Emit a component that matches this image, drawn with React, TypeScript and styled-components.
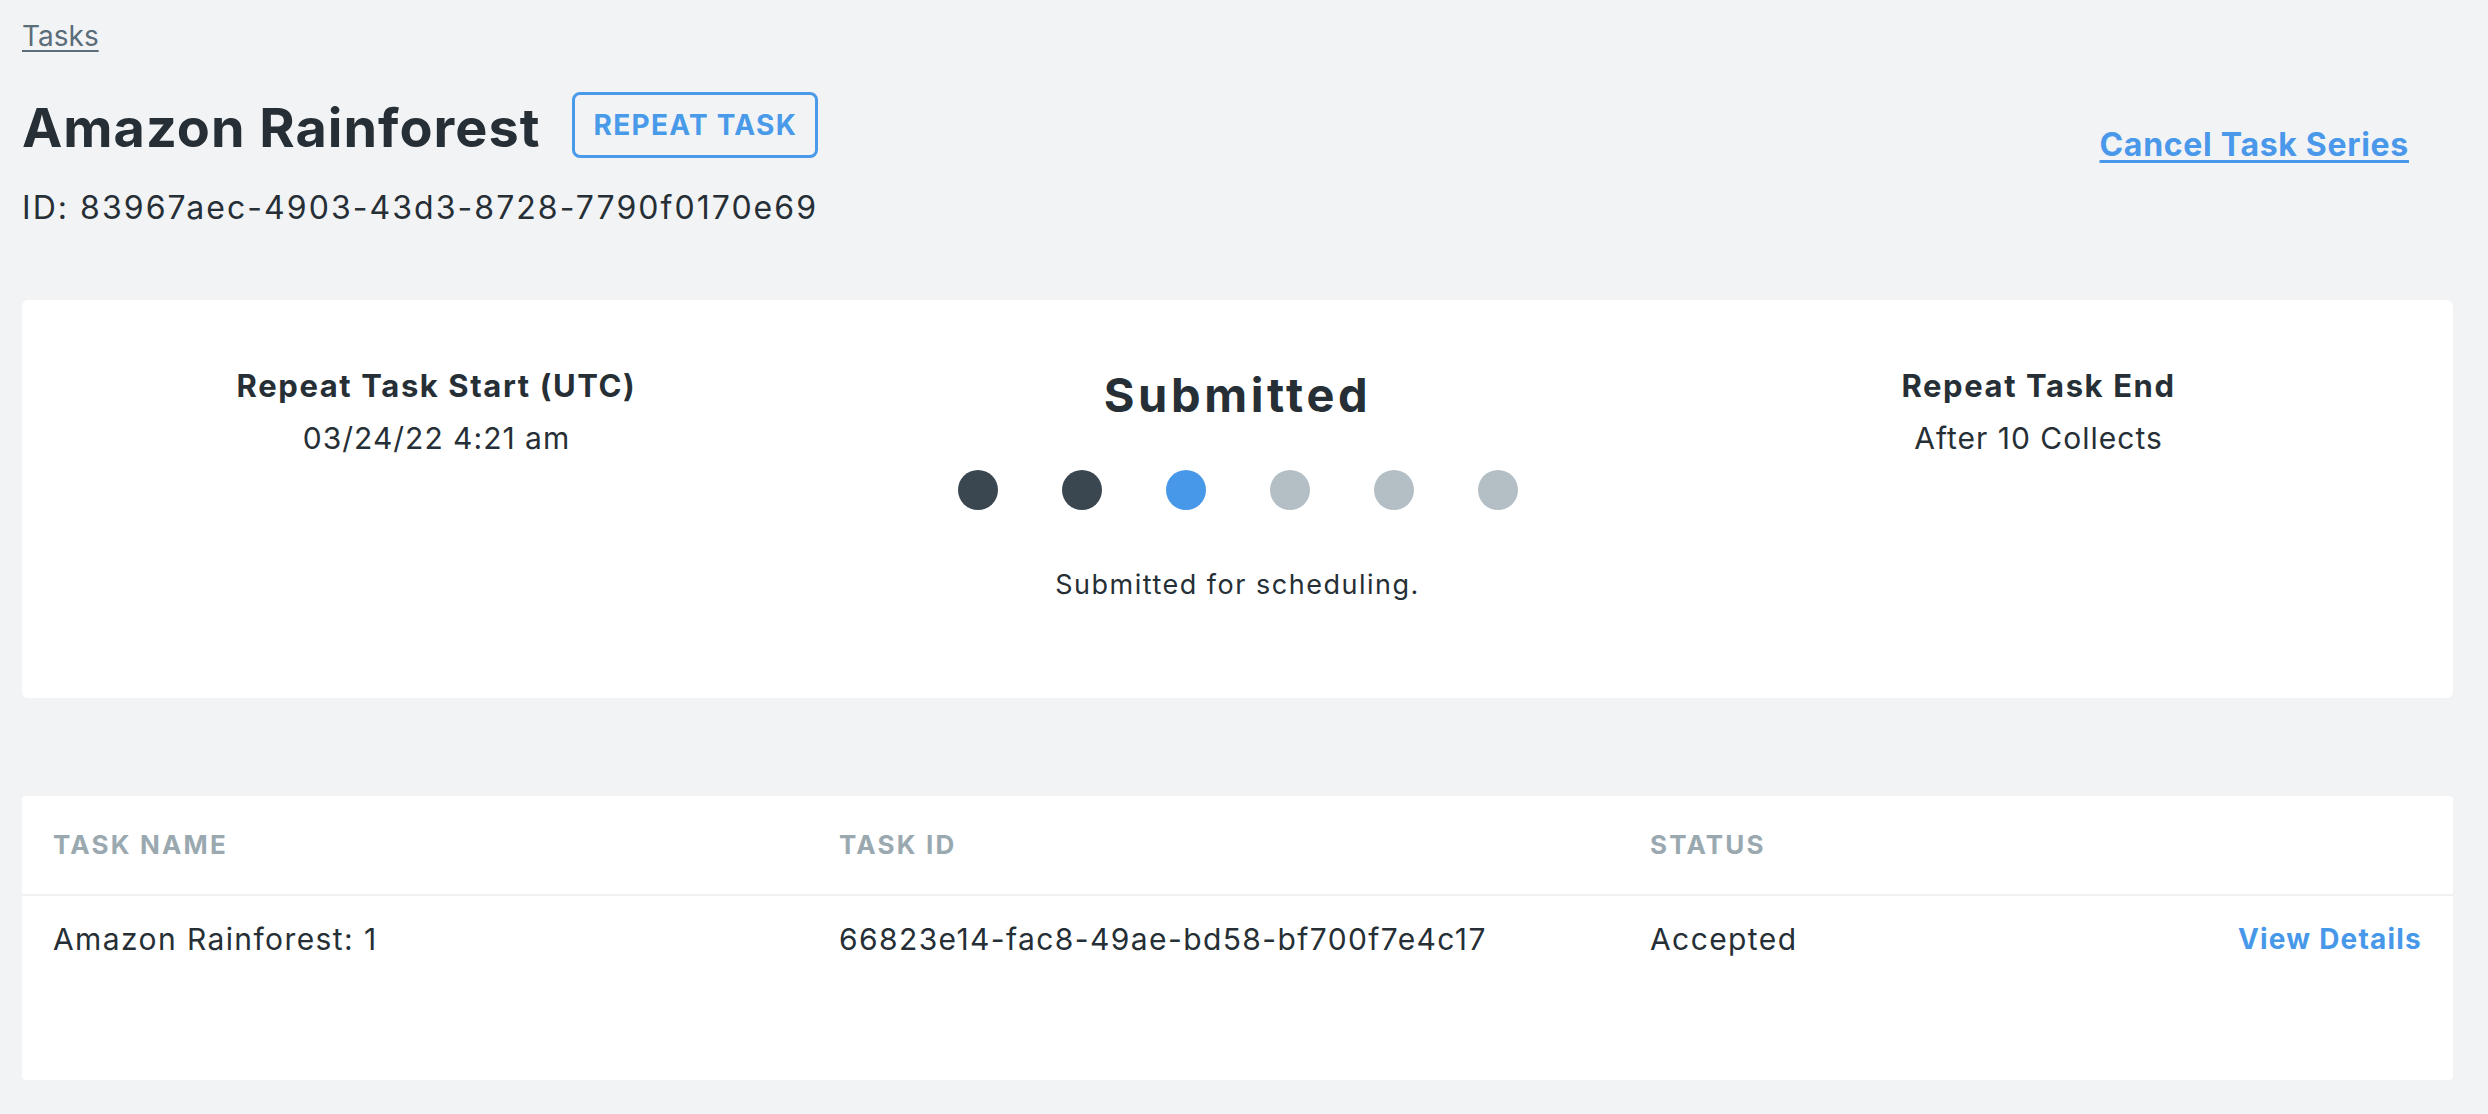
import styled, { createGlobalStyle } from "styled-components";

const GlobalStyle = createGlobalStyle`
  html, body {
    margin: 0;
    padding: 0;
    background-color: #f2f3f5;
  }
  body {
    font-family: Inter, "Noto Sans", "DejaVu Sans", sans-serif;
    color: #262f35;
  }
`;

type StepState = "done" | "current" | "todo";

const steps: StepState[] = ["done", "done", "current", "todo", "todo", "todo"];

const tasks = [
  {
    name: "Amazon Rainforest: 1",
    id: "66823e14-fac8-49ae-bd58-bf700f7e4c17",
    status: "Accepted",
  },
];

export default function App() {
  return (
    <>
      <GlobalStyle />
      <Page>
        <Breadcrumb href="#">Tasks</Breadcrumb>

        <Header>
          <div>
            <TitleRow>
              <Title>Amazon Rainforest</Title>
              <RepeatButton>REPEAT TASK</RepeatButton>
            </TitleRow>
            <SeriesId>ID: 83967aec-4903-43d3-8728-7790f0170e69</SeriesId>
          </div>
          <CancelLink href="#">Cancel Task Series</CancelLink>
        </Header>

        <SummaryCard>
          <InfoColumn>
            <InfoLabel>Repeat Task Start (UTC)</InfoLabel>
            <InfoValue>03/24/22 4:21 am</InfoValue>
          </InfoColumn>

          <StatusColumn>
            <StatusTitle>Submitted</StatusTitle>
            <Dots>
              {steps.map((s, i) => (
                <Dot key={i} $state={s} />
              ))}
            </Dots>
            <StatusText>Submitted for scheduling.</StatusText>
          </StatusColumn>

          <InfoColumn>
            <InfoLabel>Repeat Task End</InfoLabel>
            <InfoValue>After 10 Collects</InfoValue>
          </InfoColumn>
        </SummaryCard>

        <TableCard>
          <HeadRow>
            <HeadCell>Task Name</HeadCell>
            <HeadCell>Task ID</HeadCell>
            <HeadCell>Status</HeadCell>
            <span />
          </HeadRow>
          {tasks.map((t) => (
            <BodyRow key={t.id}>
              <Cell>{t.name}</Cell>
              <Cell>{t.id}</Cell>
              <Cell>{t.status}</Cell>
              <DetailsLink href="#">View Details</DetailsLink>
            </BodyRow>
          ))}
        </TableCard>
      </Page>
    </>
  );
}

const Page = styled.div`
  padding: 16px 35px 40px 22px;
  display: flex;
  flex-direction: column;
`;

const Breadcrumb = styled.a`
  align-self: flex-start;
  font-size: 28px;
  line-height: 40px;
  color: #5b6d79;
  text-decoration: underline;
  text-underline-offset: 4px;
  text-decoration-thickness: 2px;
`;

const Header = styled.div`
  margin-top: 36px;
  display: flex;
  justify-content: space-between;
  align-items: flex-start;
`;

const TitleRow = styled.div`
  display: flex;
  align-items: center;
  gap: 32px;
`;

const Title = styled.h1`
  margin: 0;
  padding-top: 5px;
  font-size: 54px;
  line-height: 60px;
  font-weight: 700;
  letter-spacing: 1px;
`;

const RepeatButton = styled.button`
  height: 66px;
  padding: 0 18px;
  background: transparent;
  border: 3px solid #4a9aea;
  border-radius: 8px;
  color: #4a9aea;
  font-family: inherit;
  font-size: 28px;
  font-weight: 700;
  letter-spacing: 1.3px;
  cursor: pointer;
`;

const SeriesId = styled.div`
  margin-top: 30px;
  font-size: 32px;
  line-height: 40px;
  letter-spacing: 2.05px;
`;

const CancelLink = styled.a`
  margin-top: 33px;
  margin-right: 44px;
  font-size: 32px;
  line-height: 40px;
  font-weight: 700;
  letter-spacing: 0.7px;
  color: #4a98ea;
  text-decoration: underline;
  text-underline-offset: 4px;
  text-decoration-thickness: 3px;
`;

const SummaryCard = styled.section`
  margin-top: 72px;
  padding: 66px 14px 95px;
  background: #ffffff;
  border-radius: 6px;
  display: grid;
  grid-template-columns: 1fr 1fr 1fr;
  text-align: center;
`;

const InfoColumn = styled.div`
  display: flex;
  flex-direction: column;
  align-items: center;
`;

const InfoLabel = styled.div`
  font-size: 31px;
  line-height: 40px;
  font-weight: 700;
  letter-spacing: 1.6px;
`;

const InfoValue = styled.div`
  margin-top: 12px;
  font-size: 30px;
  line-height: 40px;
  letter-spacing: 1px;
`;

const StatusColumn = styled.div`
  display: flex;
  flex-direction: column;
  align-items: center;
`;

const StatusTitle = styled.div`
  font-size: 47px;
  line-height: 58px;
  font-weight: 700;
  letter-spacing: 3.6px;
`;

const Dots = styled.div`
  margin-top: 46px;
  display: flex;
  gap: 64px;
`;

const dotColor: Record<StepState, string> = {
  done: "#3a4750",
  current: "#4898ea",
  todo: "#b4bec5",
};

const Dot = styled.span<{ $state: StepState }>`
  width: 40px;
  height: 40px;
  border-radius: 50%;
  background: ${(p) => dotColor[p.$state]};
`;

const StatusText = styled.div`
  margin-top: 57px;
  font-size: 27px;
  line-height: 36px;
  letter-spacing: 1.5px;
`;

const TableCard = styled.section`
  margin-top: 98px;
  background: #ffffff;
  border-radius: 4px;
`;

const HeadRow = styled.div`
  height: 98px;
  padding: 0 31px;
  display: grid;
  grid-template-columns: 786px 811px 1fr auto;
  align-items: center;
  border-bottom: 2px solid #f0f1f3;
`;

const HeadCell = styled.div`
  font-size: 26px;
  line-height: 40px;
  font-weight: 700;
  letter-spacing: 2.2px;
  color: #9aa9b0;
  text-transform: uppercase;
`;

const BodyRow = styled.div`
  height: 184px;
  box-sizing: border-box;
  padding: 23px 31px 0;
  display: grid;
  grid-template-columns: 786px 811px 1fr auto;
  align-items: start;
`;

const Cell = styled.div`
  font-size: 30px;
  line-height: 40px;
  letter-spacing: 1.4px;
`;

const DetailsLink = styled.a`
  font-size: 28px;
  line-height: 40px;
  font-weight: 700;
  letter-spacing: 1.2px;
  color: #4898ea;
  text-decoration: none;
`;
